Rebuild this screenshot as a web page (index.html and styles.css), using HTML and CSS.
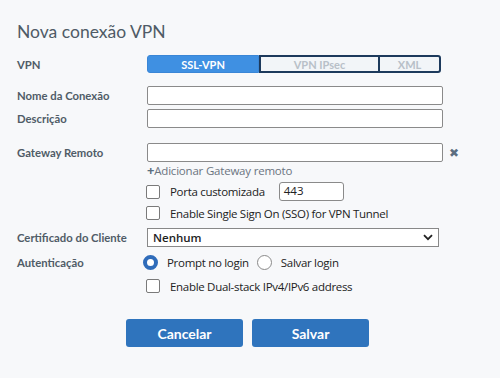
FILE: index.html
```html
<!DOCTYPE html>
<html lang="pt">
<head>
<meta charset="utf-8">
<link rel="stylesheet" href="styles.css">
</head>
<body>
<div class="page">
  <h1 class="title">Nova conexão VPN</h1>

  <div class="row row-vpn">
    <div class="label">VPN</div>
    <div class="seg">
      <div class="seg-item seg-active">SSL-VPN</div>
      <div class="seg-rest">
        <div class="seg-item seg-ipsec">VPN IPsec</div>
        <div class="seg-item seg-xml">XML</div>
      </div>
    </div>
  </div>

  <div class="row row-name">
    <div class="label">Nome da Conexão</div>
    <div class="input wide"></div>
  </div>

  <div class="row row-desc">
    <div class="label">Descrição</div>
    <div class="input wide"></div>
  </div>

  <div class="row row-gw">
    <div class="label">Gateway Remoto</div>
    <div class="input wide"></div>
    <span class="remove">✖</span>
  </div>

  <div class="row row-add">
    <div class="label"></div>
    <div class="add"><span class="plus">+</span>Adicionar Gateway remoto</div>
  </div>

  <div class="row row-port">
    <div class="label"></div>
    <span class="check"></span>
    <span class="opt">Porta customizada</span>
    <div class="input port">443</div>
  </div>

  <div class="row row-sso">
    <div class="label"></div>
    <span class="check"></span>
    <span class="opt">Enable Single Sign On (SSO) for VPN Tunnel</span>
  </div>

  <div class="row row-cert">
    <div class="label">Certificado do Cliente</div>
    <div class="select">
      <span>Nenhum</span>
      <svg class="chev" width="10" height="7" viewBox="0 0 10 7"><path d="M1 1.2 L5 5.2 L9 1.2" fill="none" stroke="#222" stroke-width="1.8"/></svg>
    </div>
  </div>

  <div class="row row-auth">
    <div class="label">Autenticação</div>
    <span class="radio on"></span>
    <span class="opt">Prompt no login</span>
    <span class="radio off"></span>
    <span class="opt">Salvar login</span>
  </div>

  <div class="row row-dual">
    <div class="label"></div>
    <span class="check"></span>
    <span class="opt">Enable Dual-stack IPv4/IPv6 address</span>
  </div>

  <div class="buttons">
    <button class="btn">Cancelar</button>
    <button class="btn">Salvar</button>
  </div>
</div>
</body>
</html>
```
FILE: styles.css
```css
html, body {
  margin: 0;
  padding: 0;
  background: #f7f8fa;
}
body {
  width: 500px;
  height: 378px;
  overflow: hidden;
  font-family: Lato, "Liberation Sans", sans-serif;
}
.page {
  padding: 21px 0 0 17px;
}
.title {
  margin: 0;
  font-size: 17.5px;
  font-weight: 400;
  color: #4f5b66;
  line-height: 22px;
}
.row {
  display: flex;
  align-items: center;
}
.label {
  width: 130px;
  flex: none;
  font-size: 11.3px;
  font-weight: 700;
  color: #505c67;
}
.row-vpn { margin-top: 12px; height: 18px; }
.seg {
  display: flex;
  width: 294px;
  height: 18px;
}
.seg-item {
  font-size: 11px;
  font-weight: 700;
  color: #b8c0c8;
  display: flex;
  align-items: center;
  justify-content: center;
  height: 100%;
}
.seg-active {
  width: 112px;
  box-sizing: border-box;
  background: #3f90e2;
  border: 1px solid #3a86d6;
  color: #fff;
  border-radius: 3px 0 0 3px;
}
.seg-rest {
  flex: 1;
  display: flex;
  box-sizing: border-box;
  border: 2px solid #1d3a5c;
  border-radius: 0 3px 3px 0;
  background: #f2f5f8;
}
.seg-ipsec {
  width: 117px;
  border-right: 2px solid #1d3a5c;
}
.seg-xml { flex: 1; }

.input {
  height: 19px;
  box-sizing: border-box;
  background: #fff;
  border: 1px solid #8a8a8a;
  border-radius: 2px;
}
.wide { width: 296px; }
.row-name { margin-top: 13px; }
.row-desc { margin-top: 4px; }
.row-gw { margin-top: 15px; }
.remove {
  margin-left: 6px;
  font-size: 12px;
  color: #5b6e80;
}
.row-add { margin-top: 0; height: 15px; }
.add {
  font-family: "Open Sans", sans-serif;
  font-size: 11.5px;
  color: #6b7480;
  letter-spacing: -0.2px;
}
.plus {
  font-weight: 700;
  color: #5b6e80;
  font-size: 13px;
}
.check {
  width: 14px;
  height: 14px;
  box-sizing: border-box;
  border: 1px solid #7a7a7a;
  border-radius: 2px;
  background: #fff;
  flex: none;
  margin-left: -1px;
}
.opt {
  font-family: "Open Sans", sans-serif;
  font-size: 11.5px;
  color: #222;
  margin-left: 10px;
  letter-spacing: -0.3px;
}
.row-port { margin-top: 5px; height: 19px; }
.port {
  width: 65px;
  height: 19px;
  margin-left: 14px;
  font-family: "Open Sans", sans-serif;
  font-size: 11.5px;
  color: #222;
  padding: 0 0 0 4px;
  line-height: 16px;
  border-radius: 3px;
}
.row-sso { margin-top: 4px; height: 16px; }
.row-cert { margin-top: 7px; }
.select {
  width: 292px;
  height: 19px;
  box-sizing: border-box;
  background: #fff;
  border: 1px solid #888;
  display: flex;
  align-items: center;
  justify-content: space-between;
  padding: 0 5px 0 5px;
  font-family: "Open Sans", sans-serif;
  font-size: 11.5px;
  font-weight: 600;
  color: #222;
}
.row-auth { margin-top: 6px; height: 18px; }
.radio {
  width: 15px;
  height: 15px;
  box-sizing: border-box;
  border-radius: 50%;
  background: #fff;
  flex: none;
}
.radio.on {
  border: 4px solid #2f6cba;
  margin-left: -4px;
}
.radio.on + .opt { margin-left: 9px; }
.radio.off {
  border: 1px solid #8a8a8a;
  margin-left: 8px;
}
.radio.off + .opt { margin-left: 9px; }
.row-dual { margin-top: 7px; height: 16px; }

.buttons {
  display: flex;
  gap: 9px;
  margin: 25px 0 0 109px;
}
.btn {
  width: 117px;
  height: 28px;
  border: none;
  border-radius: 3px;
  background: #2f74bd;
  color: #fff;
  font-family: Lato, sans-serif;
  font-weight: 700;
  font-size: 14px;
  padding: 0;
}
```
